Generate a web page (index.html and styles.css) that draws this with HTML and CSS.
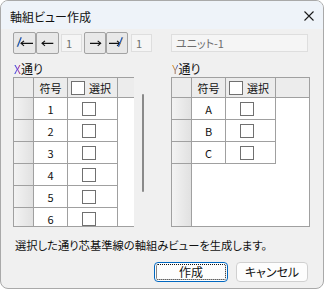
FILE: index.html
```html
<!DOCTYPE html>
<html lang="ja">
<head>
<meta charset="utf-8">
<title>軸組ビュー作成</title>
<link rel="stylesheet" href="styles.css">
</head>
<body>
<div class="window">
  <div class="titlebar">
    <span class="title">軸組ビュー作成</span>
    <svg class="close" width="10" height="10" viewBox="0 0 10 10"><path d="M0.5 0.5 L9.5 9.5 M9.5 0.5 L0.5 9.5" stroke="#1b1b1b" stroke-width="1.1" fill="none"/></svg>
  </div>
  <div class="content">
    <div class="toolbar">
      <button class="nav nav-a"><svg width="23" height="22" viewBox="0 0 23 22"><path d="M4.5 14.8 L8.3 5.3" stroke="#e8a030" stroke-width="0.8" transform="translate(-0.6,0)"/><path d="M4.5 14.8 L8.3 5.3" stroke="#1a5cc8" stroke-width="1.2"/><path d="M8 11.3 H20" stroke="#111" stroke-width="1.2"/><path d="M11 8.8 L8 11.3 L11 13.8" stroke="#111" stroke-width="1.1" fill="none"/></svg></button>
      <button class="nav"><svg width="23" height="22" viewBox="0 0 23 22"><path d="M6 11.3 H17.3" stroke="#111" stroke-width="1.2"/><path d="M9 8.8 L6 11.3 L9 13.8" stroke="#111" stroke-width="1.1" fill="none"/></svg></button>
      <div class="tbox small">1</div>
      <button class="nav nav-c"><svg width="22" height="22" viewBox="0 0 22 22"><path d="M6 11.3 H16.7" stroke="#111" stroke-width="1.2"/><path d="M13.7 8.8 L16.7 11.3 L13.7 13.8" stroke="#111" stroke-width="1.1" fill="none"/></svg></button>
      <button class="nav nav-d"><svg width="22" height="22" viewBox="0 0 22 22"><path d="M3 11.3 H14" stroke="#111" stroke-width="1.2"/><path d="M11 8.8 L14 11.3 L11 13.8" stroke="#111" stroke-width="1.1" fill="none"/><path d="M12.4 14.8 L16.3 5.3" stroke="#e8a030" stroke-width="0.8" transform="translate(0.6,0)"/><path d="M12.4 14.8 L16.3 5.3" stroke="#1a5cc8" stroke-width="1.2"/></svg></button>
      <div class="tbox small second">1</div>
      <div class="tbox unit">ユニット-1</div>
    </div>

    <div class="panes">
      <div class="pane pane-x">
        <div class="label"><span class="axis axis-x">X</span>通り</div>
        <div class="gridwrap">
          <div class="grid">
            <div class="row hdr">
              <div class="cell c-rh"></div>
              <div class="cell c-code">符号</div>
              <div class="cell c-sel"><span class="cb"></span><span class="seltext">選択</span></div>
              <div class="cell c-fill"></div>
            </div>
            <div class="row"><div class="cell c-rh"></div><div class="cell c-code">1</div><div class="cell c-sel"><span class="cb"></span></div><div class="cell c-fill"></div></div>
            <div class="row"><div class="cell c-rh"></div><div class="cell c-code">2</div><div class="cell c-sel"><span class="cb"></span></div><div class="cell c-fill"></div></div>
            <div class="row"><div class="cell c-rh"></div><div class="cell c-code">3</div><div class="cell c-sel"><span class="cb"></span></div><div class="cell c-fill"></div></div>
            <div class="row"><div class="cell c-rh"></div><div class="cell c-code">4</div><div class="cell c-sel"><span class="cb"></span></div><div class="cell c-fill"></div></div>
            <div class="row"><div class="cell c-rh"></div><div class="cell c-code">5</div><div class="cell c-sel"><span class="cb"></span></div><div class="cell c-fill"></div></div>
            <div class="row"><div class="cell c-rh"></div><div class="cell c-code">6</div><div class="cell c-sel"><span class="cb"></span></div><div class="cell c-fill"></div></div>
          </div>
          <div class="vscroll"><div class="thumb"></div></div>
        </div>
      </div>

      <div class="pane pane-y">
        <div class="label"><span class="axis axis-y">Y</span>通り</div>
        <div class="grid grid-y">
          <div class="row hdr">
            <div class="cell c-rh"></div>
            <div class="cell c-code">符号</div>
            <div class="cell c-sel"><span class="cb"></span><span class="seltext">選択</span></div>
            <div class="cell c-fill"></div>
          </div>
          <div class="row"><div class="cell c-rh"></div><div class="cell c-code">A</div><div class="cell c-sel"><span class="cb"></span></div><div class="cell c-fill"></div></div>
          <div class="row"><div class="cell c-rh"></div><div class="cell c-code">B</div><div class="cell c-sel"><span class="cb"></span></div><div class="cell c-fill"></div></div>
          <div class="row"><div class="cell c-rh"></div><div class="cell c-code">C</div><div class="cell c-sel"><span class="cb"></span></div><div class="cell c-fill"></div></div>
        </div>
      </div>
    </div>

    <div class="message">選択した通り芯基準線の軸組みビューを生成します。</div>

    <div class="actions">
      <button class="btn btn-primary">作成</button>
      <button class="btn btn-cancel">キャンセル</button>
    </div>
  </div>
</div>
</body>
</html>
```

FILE: styles.css
```css
html, body {
  margin: 0;
  padding: 0;
  background: #ffffff;
}

body {
  font-family: "Noto Sans CJK JP", "Noto Sans", sans-serif;
  font-feature-settings: "palt";
  color: #1a1a1a;
}

.window {
  width: 324px;
  height: 289px;
  box-sizing: border-box;
  border: 1px solid #a9a9a9;
  border-radius: 8px;
  background: #f0f0f0;
  overflow: hidden;
}

.titlebar {
  height: 28px;
  box-sizing: border-box;
  padding: 3px 9px 0 9px;
  display: flex;
  align-items: center;
  justify-content: space-between;
  background: #eef3f9;
}

.title {
  font-size: 12px;
  line-height: 16px;
  color: #111;
}

.close {
  display: block;
  margin-top: -2px;
}

.content {
  padding: 3px 15px 0 12px;
}

/* toolbar */
.toolbar {
  display: flex;
  align-items: center;
  height: 22px;
}

.nav {
  width: 23px;
  height: 22px;
  box-sizing: border-box;
  padding: 0;
  margin: 0;
  border: 1px solid #a3a3a3;
  border-radius: 2px;
  background: #e8e8e8;
  display: flex;
  align-items: center;
  justify-content: center;
}

.nav svg {
  display: block;
  flex: none;
  margin: -1px;
}

.nav-c {
  width: 22px;
  margin-left: 2px;
}

.nav-d {
  width: 22px;
}

.tbox {
  height: 18px;
  box-sizing: border-box;
  border: 1px solid #dedede;
  background: #f5f5f5;
  color: #6d6d6d;
  font-size: 11px;
  line-height: 16px;
  padding-left: 4px;
}

.tbox.small {
  width: 21px;
  margin-left: 2px;
}

.tbox.second {
  margin-left: 3px;
}

.tbox.unit {
  width: 137px;
  margin-left: 19px;
}

/* panes */
.panes {
  display: flex;
  margin-top: 7px;
}

.pane-x {
  width: 158px;
  flex: none;
}

.pane-y {
  width: 139px;
  flex: none;
}

.label {
  height: 16px;
  line-height: 16px;
  font-size: 12px;
  padding-left: 1px;
  color: #111;
}

.axis {
  display: inline-block;
  background-clip: text;
  -webkit-background-clip: text;
  color: transparent;
}

.axis-x {
  background-image: linear-gradient(90deg, #2f4fe0 0%, #7a3ad0 55%, #e03a40 100%);
}

.axis-y {
  background-image: linear-gradient(90deg, #f0a020 0%, #b08060 50%, #3a66e0 100%);
}

.gridwrap {
  display: flex;
}

.grid {
  width: 121px;
  height: 150px;
  box-sizing: border-box;
  border-left: 1px solid #a0a0a0;
  border-top: 1px solid #a0a0a0;
  border-bottom: 1px solid #a0a0a0;
  background:
    linear-gradient(#a0a0a0, #a0a0a0) 19px 0 / 1px 100% no-repeat,
    linear-gradient(to right, #f3f3f3, #e1e1e1) 0 0 / 19px 100% no-repeat,
    #ffffff;
  overflow: hidden;
  flex: none;
}

.grid-y {
  width: 139px;
  border-right: 1px solid #a0a0a0;
}

.row {
  display: flex;
}

.cell {
  box-sizing: border-box;
  height: 22px;
  border-right: 1px solid #a0a0a0;
  border-bottom: 1px solid #a0a0a0;
  display: flex;
  align-items: center;
  justify-content: center;
  font-size: 11px;
  line-height: 14px;
  color: #111;
  flex: none;
}

.hdr .cell {
  height: 20px;
  background: #ececec;
}

.c-rh {
  width: 20px;
  background: linear-gradient(to right, #f3f3f3, #e1e1e1);
}

.c-code {
  width: 34px;
}

.c-sel {
  width: 50px;
  justify-content: flex-start;
  padding-left: 14px;
}

.hdr .c-sel {
  padding-left: 3px;
}

.c-fill {
  flex: 1;
  border-right: none;
  border-bottom: none;
  background: #ffffff;
}

.hdr .c-fill {
  border-bottom: 1px solid #a0a0a0;
}

.cb {
  display: block;
  width: 14px;
  height: 14px;
  box-sizing: border-box;
  border: 1px solid #707070;
  background: #ffffff;
  flex: none;
}

.seltext {
  margin-left: 4px;
  font-size: 11px;
}

.vscroll {
  width: 16px;
  padding-top: 17px;
  padding-left: 8px;
  box-sizing: border-box;
}

.thumb {
  width: 2px;
  height: 98px;
  border-radius: 1px;
  background: #8a8a8a;
}

/* message and buttons */
.message {
  margin-top: 10px;
  height: 16px;
  line-height: 16px;
  font-size: 11.3px;
  padding-left: 2px;
  color: #111;
}

.actions {
  display: flex;
  justify-content: flex-end;
  gap: 8px;
  margin-top: 9px;
}

.btn {
  height: 20px;
  box-sizing: border-box;
  margin: 0;
  padding: 0;
  border-radius: 4px;
  font-family: "Noto Sans CJK JP", "Noto Sans", sans-serif;
  font-feature-settings: "palt";
  font-size: 12px;
  line-height: 16px;
  color: #111;
  background: #fdfdfd;
}

.btn-primary {
  width: 74px;
  border: 1px solid #0067c0;
  outline: 1px dotted #111;
  outline-offset: -3px;
}

.btn-cancel {
  width: 72px;
  border: 1px solid #d0d0d0;
}
```
